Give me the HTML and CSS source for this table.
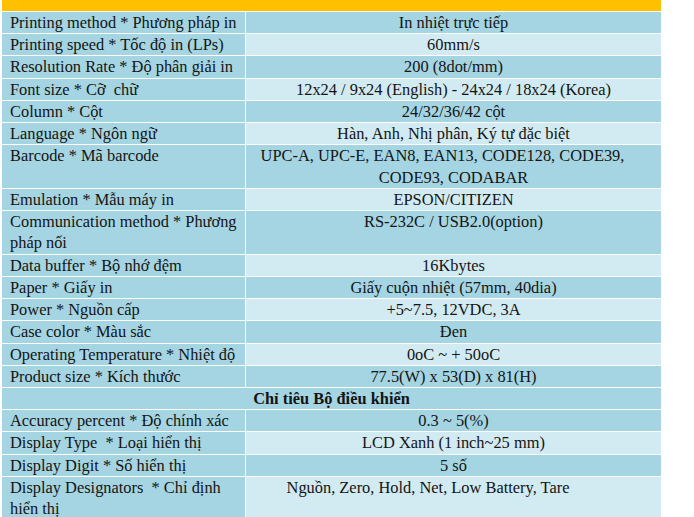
FILE: index.html
```html
<!DOCTYPE html>
<html lang="vi">
<head>
<meta charset="utf-8">
<title>Thông số kỹ thuật</title>
<link rel="stylesheet" href="styles.css">
</head>
<body>
<table class="spec">
  <colgroup><col class="c-label"><col class="c-value"></colgroup>
  <tr class="top"><td colspan="2"></td></tr>
  <tr><td>Printing method * Phương pháp in</td><td class="v dark">In nhiệt trực tiếp</td></tr>
  <tr><td>Printing speed * Tốc độ in (LPs)</td><td class="v light">60mm/s</td></tr>
  <tr><td>Resolution Rate * Độ phân giải in</td><td class="v dark">200 (8dot/mm)</td></tr>
  <tr><td>Font size * Cỡ&nbsp; chữ</td><td class="v light">12x24 / 9x24 (English) - 24x24 / 18x24 (Korea)</td></tr>
  <tr><td>Column * Cột</td><td class="v dark">24/32/36/42 cột</td></tr>
  <tr><td>Language * Ngôn ngữ</td><td class="v light">Hàn, Anh, Nhị phân, Ký tự đặc biệt</td></tr>
  <tr><td>Barcode * Mã barcode</td><td class="v dark"><span class="pad-s">UPC-A, UPC-E, EAN8, EAN13, CODE128, CODE39,</span><br>CODE93, CODABAR</td></tr>
  <tr><td>Emulation * Mẫu máy in</td><td class="v light">EPSON/CITIZEN</td></tr>
  <tr><td>Communication method * Phương pháp nối</td><td class="v dark">RS-232C / USB2.0(option)</td></tr>
  <tr><td>Data buffer * Bộ nhớ đệm</td><td class="v light">16Kbytes</td></tr>
  <tr><td>Paper * Giấy in</td><td class="v dark">Giấy cuộn nhiệt (57mm, 40dia)</td></tr>
  <tr><td>Power * Nguồn cấp</td><td class="v light">+5~7.5, 12VDC, 3A</td></tr>
  <tr><td>Case color * Màu sắc</td><td class="v dark">Đen</td></tr>
  <tr><td>Operating Temperature * Nhiệt độ</td><td class="v light">0oC ~ + 50oC</td></tr>
  <tr><td>Product size * Kích thước</td><td class="v dark">77.5(W) x 53(D) x 81(H)</td></tr>
  <tr class="section"><td colspan="2">Chỉ tiêu Bộ điều khiển</td></tr>
  <tr><td>Accuracy percent * Độ chính xác</td><td class="v dark">0.3 ~ 5(%)</td></tr>
  <tr><td>Display Type&nbsp; * Loại hiển thị</td><td class="v light">LCD Xanh (1 inch~25 mm)</td></tr>
  <tr><td>Display Digit * Số hiển thị</td><td class="v dark">5 số</td></tr>
  <tr><td>Display Designators&nbsp; * Chỉ định hiển thị</td><td class="v light"><span class="pad-l">Nguồn, Zero, Hold, Net, Low Battery, Tare</span></td></tr>
</table>
</body>
</html>
```

FILE: styles.css
```css
html, body {
  margin: 0;
  padding: 0;
  background: #ffffff;
}

.spec {
  margin-left: 2px;
  width: 659px;
  table-layout: fixed;
  border-collapse: separate;
  border-spacing: 0;
  font-family: "Liberation Serif", "Times New Roman", serif;
  font-size: 16.4px;
  line-height: 21.23px;
  color: #141414;
}

.c-label { width: 243px; }

.spec td {
  padding: 0 7px 0 8px;
  vertical-align: top;
  background: #a5d5e2;
  border-top: 1px solid #ffffff;
}

.spec td.v {
  padding: 0 7px;
  text-align: center;
  border-left: 1px solid #ffffff;
}

.spec td.light { background: #d2eaf1; }
.spec td.dark { background: #a5d5e2; }

.spec tr.top td {
  background: #ffc000;
  height: 11px;
  line-height: 11px;
  border-top: 0;
  padding: 0;
}

.spec tr.section td {
  padding: 0 7px;
  text-align: center;
  font-weight: bold;
}

.pad-s { padding-right: 22px; }
.pad-l { padding-right: 51px; }
```
